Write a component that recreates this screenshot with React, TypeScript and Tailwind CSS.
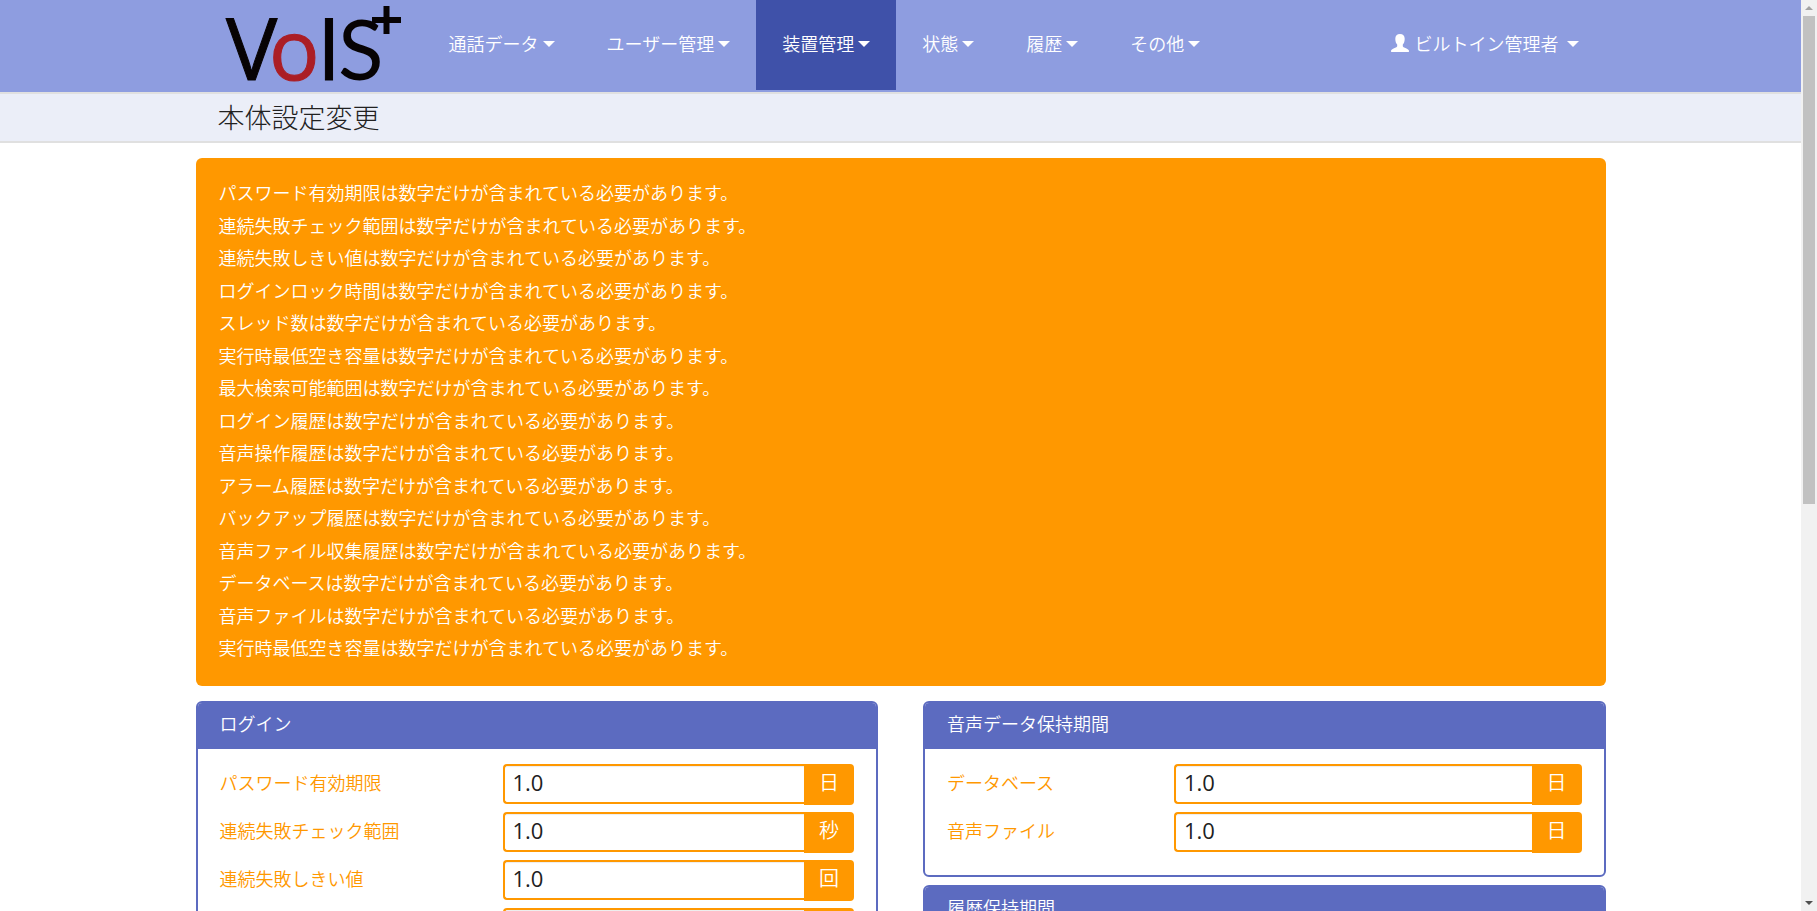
import React from "react";

type Field = { label: string; unit: string };

const menus = [
  { label: "通話データ" },
  { label: "ユーザー管理" },
  { label: "装置管理", active: true },
  { label: "状態" },
  { label: "履歴" },
  { label: "その他" },
];

const errorFields = [
  "パスワード有効期限",
  "連続失敗チェック範囲",
  "連続失敗しきい値",
  "ログインロック時間",
  "スレッド数",
  "実行時最低空き容量",
  "最大検索可能範囲",
  "ログイン履歴",
  "音声操作履歴",
  "アラーム履歴",
  "バックアップ履歴",
  "音声ファイル収集履歴",
  "データベース",
  "音声ファイル",
  "実行時最低空き容量",
];

const loginFields: Field[] = [
  { label: "パスワード有効期限", unit: "日" },
  { label: "連続失敗チェック範囲", unit: "秒" },
  { label: "連続失敗しきい値", unit: "回" },
  { label: "ログインロック時間", unit: "秒" },
];

const voiceFields: Field[] = [
  { label: "データベース", unit: "日" },
  { label: "音声ファイル", unit: "日" },
];

const historyFields: Field[] = [{ label: "ログイン履歴", unit: "日" }];

function Caret() {
  return (
    <svg className="mt-[2px] h-[6px] w-3 shrink-0" viewBox="0 0 12 6" fill="currentColor" aria-hidden="true">
      <path d="M0 0h12L6 6z" />
    </svg>
  );
}

function Logo() {
  return (
    <svg className="h-[90px] w-[204px] shrink-0 overflow-visible" viewBox="0 0 204 90" role="img" aria-label="VoIS+">
      <g fontFamily="'Open Sans', 'Noto Sans', sans-serif" fontSize="86" fontWeight="400" fill="#070304" stroke="#070304" strokeWidth="1">
        <text x="7" y="80">V</text>
        <text x="50" y="80" fontSize="84" fill="#ab1e25" stroke="#ab1e25">o</text>
        <text x="98" y="80">I</text>
        <text x="119" y="80" fontFamily="Lato, sans-serif" fontSize="84" stroke="none">S</text>
      </g>
      <path d="M153 20h29M167.500 6v28" stroke="#070304" strokeWidth="6" fill="none" />
    </svg>
  );
}

function UserIcon() {
  return (
    <svg className="h-[18px] w-[18px] shrink-0" viewBox="0 0 18 18" fill="currentColor" aria-hidden="true">
      <path d="M9 0C6 0 4.300 1.700 4.300 4.700c0 2.600.7 4.600 1.900 5.900v1.300c0 .7-.5 1.100-1.400 1.500C2.200 14.500.6 15.300.1 16.300V18h17.800v-1.700c-.5-1-2.100-1.800-4.700-2.900-.9-.4-1.400-.8-1.400-1.500v-1.300c1.200-1.300 1.900-3.300 1.900-5.900C13.700 1.700 12 0 9 0z" />
    </svg>
  );
}

function Panel({ title, fields, columns }: { title: string; fields: Field[]; columns: string }) {
  return (
    <section className="overflow-hidden rounded-md border-2 border-[#5c6bc0] bg-white">
      <h2 className="bg-[#5c6bc0] px-[22px] pt-1 pb-[10px] text-lg leading-8 text-white">{title}</h2>
      <div className="flex flex-col gap-[7px] px-[22px] pt-[15px] pb-[22px]">
        {fields.map((field) => {
          const id = `${title}-${field.label}`;
          return (
            <div key={id} className={`grid ${columns}`}>
              <label htmlFor={id} className="pt-[2px] text-lg leading-8 text-[#ff9800]">
                {field.label}
              </label>
              <div className="flex h-[41px]">
                <input
                  id={id}
                  type="text"
                  defaultValue="1.0"
                  className="h-10 w-full min-w-0 rounded-l border-2 border-r-0 border-[#ff9800] bg-white px-2 pb-1 font-['Open_Sans','Noto_Sans_CJK_JP',sans-serif] text-[22px] font-normal text-[#212121] shadow-[inset_0_1px_1px_rgba(0,0,0,0.075)] outline-none"
                />
                <span className="w-[50px] shrink-0 rounded-r bg-[#ff9800] pt-[2px] text-center text-xl leading-8 text-white">
                  {field.unit}
                </span>
              </div>
            </div>
          );
        })}
      </div>
    </section>
  );
}

export default function App() {
  return (
    <div className="flex h-screen bg-white font-['Noto_Sans_CJK_JP',sans-serif] font-[350] text-[#212121]">
      <div className="min-w-0 flex-1 overflow-y-auto [scrollbar-width:none]">
        <header className="border-b-2 border-[#e0e0e0] bg-[#8e9de0] pb-[2px]">
          <div className="mx-auto flex h-[90px] max-w-[1410px] items-center justify-between pl-[23px]">
            <div className="flex h-full">
              <a href="#home" aria-label="VoIS+">
                <Logo />
              </a>
              <nav className="flex h-full">
                {menus.map((menu) => (
                  <button
                    key={menu.label}
                    type="button"
                    className={`flex h-full items-center gap-1 whitespace-nowrap px-[26px] pb-1 text-lg text-white ${
                      menu.active ? "bg-[#3f51a9]" : ""
                    }`}
                  >
                    {menu.label}
                    <Caret />
                  </button>
                ))}
              </nav>
            </div>
            <button type="button" className="flex h-full items-center gap-2 whitespace-nowrap px-[27px] pb-1 text-lg text-white">
              <span className="flex items-center gap-[6px]">
                <UserIcon />
                ビルトイン管理者
              </span>
              <Caret />
            </button>
          </div>
        </header>
        <div className="border-b-2 border-[#e0e0e0] bg-[#ebeef8]">
          <h1 className="mx-auto h-[47px] max-w-[1410px] px-[22px] text-[27px] leading-[46px] font-light">本体設定変更</h1>
        </div>
        <main className="mx-auto flex max-w-[1410px] flex-col gap-[15px] pt-[15px] pb-6">
          <div role="alert" className="rounded-md bg-[#ff9800] px-[23px] pt-[18px] pb-[23px] text-lg text-white">
            <ul className="flex min-h-[487px] flex-col justify-between">
              {errorFields.map((name, index) => (
                <li key={index} className="leading-8">
                  {name}は数字だけが含まれている必要があります。
                </li>
              ))}
            </ul>
          </div>
          <div className="grid grid-cols-2 items-start gap-[45px]">
            <Panel title="ログイン" fields={loginFields} columns="grid-cols-[283px_1fr]" />
            <div className="flex flex-col gap-2">
              <Panel title="音声データ保持期間" fields={voiceFields} columns="grid-cols-[227px_1fr]" />
              <Panel title="履歴保持期間" fields={historyFields} columns="grid-cols-[227px_1fr]" />
            </div>
          </div>
        </main>
      </div>
      <div className="flex w-4 shrink-0 flex-col items-center bg-[#f1f1f1]" aria-hidden="true">
        <div className="flex h-4 items-center">
          <svg className="h-1 w-2" viewBox="0 0 8 4" fill="#a3a3a3">
            <path d="M0 4h8L4 0z" />
          </svg>
        </div>
        <div className="flex w-full flex-1 flex-col items-center">
          <div className="h-5/9 w-3 bg-[#c1c1c1]" />
        </div>
        <div className="flex h-4 items-center">
          <svg className="h-1 w-2" viewBox="0 0 8 4" fill="#505050">
            <path d="M0 0h8L4 4z" />
          </svg>
        </div>
      </div>
    </div>
  );
}
